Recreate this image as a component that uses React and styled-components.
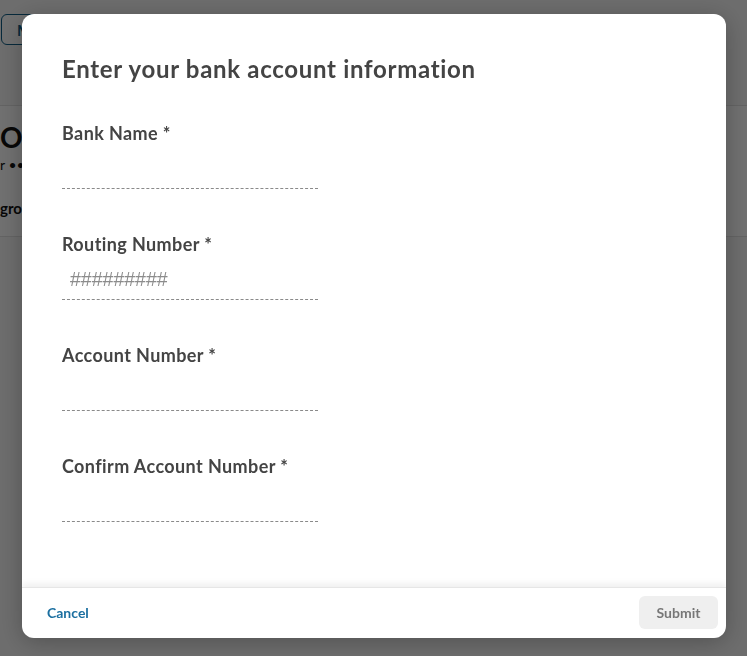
import React from "react";
import styled, { createGlobalStyle } from "styled-components";

const Global = createGlobalStyle`
  html, body { margin: 0; padding: 0; height: 100%; }
  body { font-family: "Lato", "Noto Sans", sans-serif; background: #fafafa; overflow: hidden; }
  * { box-sizing: border-box; }
`;

const Page = styled.div`
  width: 747px;
  height: 656px;
  background: #f7f7f7;
  display: flex;
  flex-direction: column;
  padding-top: 14px;
`;

const TopBar = styled.div`
  display: flex;
  padding-left: 1px;
`;

const OutlineButton = styled.button`
  width: 177px;
  height: 31px;
  border: 1.5px solid #0f5e86;
  border-radius: 6px;
  background: #fff;
  color: #0f5e86;
  font: 700 15px "Lato", sans-serif;
  text-align: left;
  padding-left: 15px;
`;

const Card = styled.div`
  margin-top: 60px;
  background: #fff;
  border-top: 1px solid #e2e2e2;
  border-bottom: 1px solid #e2e2e2;
  height: 132px;
  padding-top: 16px;
  display: flex;
  flex-direction: column;
`;

const CardTitle = styled.div`
  font: 700 28px "Lato", sans-serif;
  color: #111;
  line-height: 30px;
`;

const CardSub = styled.div`
  font: 400 14px "Lato", sans-serif;
  color: #111;
  margin-top: 4px;
`;

const CardGroup = styled.div`
  font: 700 15px "Lato", sans-serif;
  color: #111;
  margin-top: 26px;
`;

const Overlay = styled.div`
  position: fixed;
  inset: 0;
  background: rgba(0, 0, 0, 0.56);
  display: flex;
  align-items: flex-start;
  padding: 14px 0 0 22px;
`;

const Modal = styled.div`
  width: 704px;
  height: 624px;
  background: #fff;
  border-radius: 12px;
  box-shadow: 0 4px 24px rgba(0, 0, 0, 0.25);
  display: flex;
  flex-direction: column;
  overflow: hidden;
`;

const Body = styled.div`
  flex: 1;
  padding: 40px 40px 0;
  display: flex;
  flex-direction: column;
`;

const Title = styled.h2`
  margin: 0 0 37px;
  font: 700 24px/30px "Lato", "Noto Sans", sans-serif;
  letter-spacing: 0.7px;
  color: #444;
`;

const Fields = styled.div`
  display: flex;
  flex-direction: column;
  gap: 43px;
`;

const Field = styled.label`
  display: flex;
  flex-direction: column;
  width: 256px;
`;

const LabelText = styled.span`
  font: 700 18px/24px "Lato", "Noto Sans", sans-serif;
  letter-spacing: 0.4px;
  color: #444;
  white-space: nowrap;
`;

const Input = styled.input`
  margin-top: 4px;
  height: 40px;
  border: none;
  border-bottom: 1px dashed #8a8a8a;
  padding: 0 8px;
  font: 400 19.5px "Liberation Sans", Arial, sans-serif;
  color: #333;
  outline: none;
  background: transparent;
  &::placeholder { color: #8c8c8c; }
`;

const Footer = styled.div`
  height: 51px;
  flex-shrink: 0;
  border-top: 1px solid #e6e6e6;
  box-shadow: 0 -4px 6px rgba(0, 0, 0, 0.06);
  display: flex;
  align-items: center;
  justify-content: space-between;
  padding: 0 8px 2px 25px;
`;

const TextButton = styled.button`
  border: none;
  background: none;
  padding: 0;
  font: 700 14px "Lato", sans-serif;
  color: #1b6fa0;
  cursor: pointer;
`;

const SubmitButton = styled.button`
  width: 79px;
  height: 33px;
  border: none;
  border-radius: 6px;
  background: #efefef;
  color: #777;
  font: 700 14px "Lato", sans-serif;
`;

const fields = [
  { label: "Bank Name" },
  { label: "Routing Number", placeholder: "#########" },
  { label: "Account Number" },
  { label: "Confirm Account Number" },
];

export default function App() {
  return (
    <>
      <Global />
      <Page>
        <TopBar>
          <OutlineButton>Manage</OutlineButton>
        </TopBar>
        <Card>
          <CardTitle>OUR</CardTitle>
          <CardSub>r ••••</CardSub>
          <CardGroup>group</CardGroup>
        </Card>
      </Page>
      <Overlay>
        <Modal>
          <Body>
            <Title>Enter your bank account information</Title>
            <Fields>
              {fields.map((f) => (
                <Field key={f.label}>
                  <LabelText>{f.label} *</LabelText>
                  <Input placeholder={f.placeholder || ""} />
                </Field>
              ))}
            </Fields>
          </Body>
          <Footer>
            <TextButton>Cancel</TextButton>
            <SubmitButton>Submit</SubmitButton>
          </Footer>
        </Modal>
      </Overlay>
    </>
  );
}
